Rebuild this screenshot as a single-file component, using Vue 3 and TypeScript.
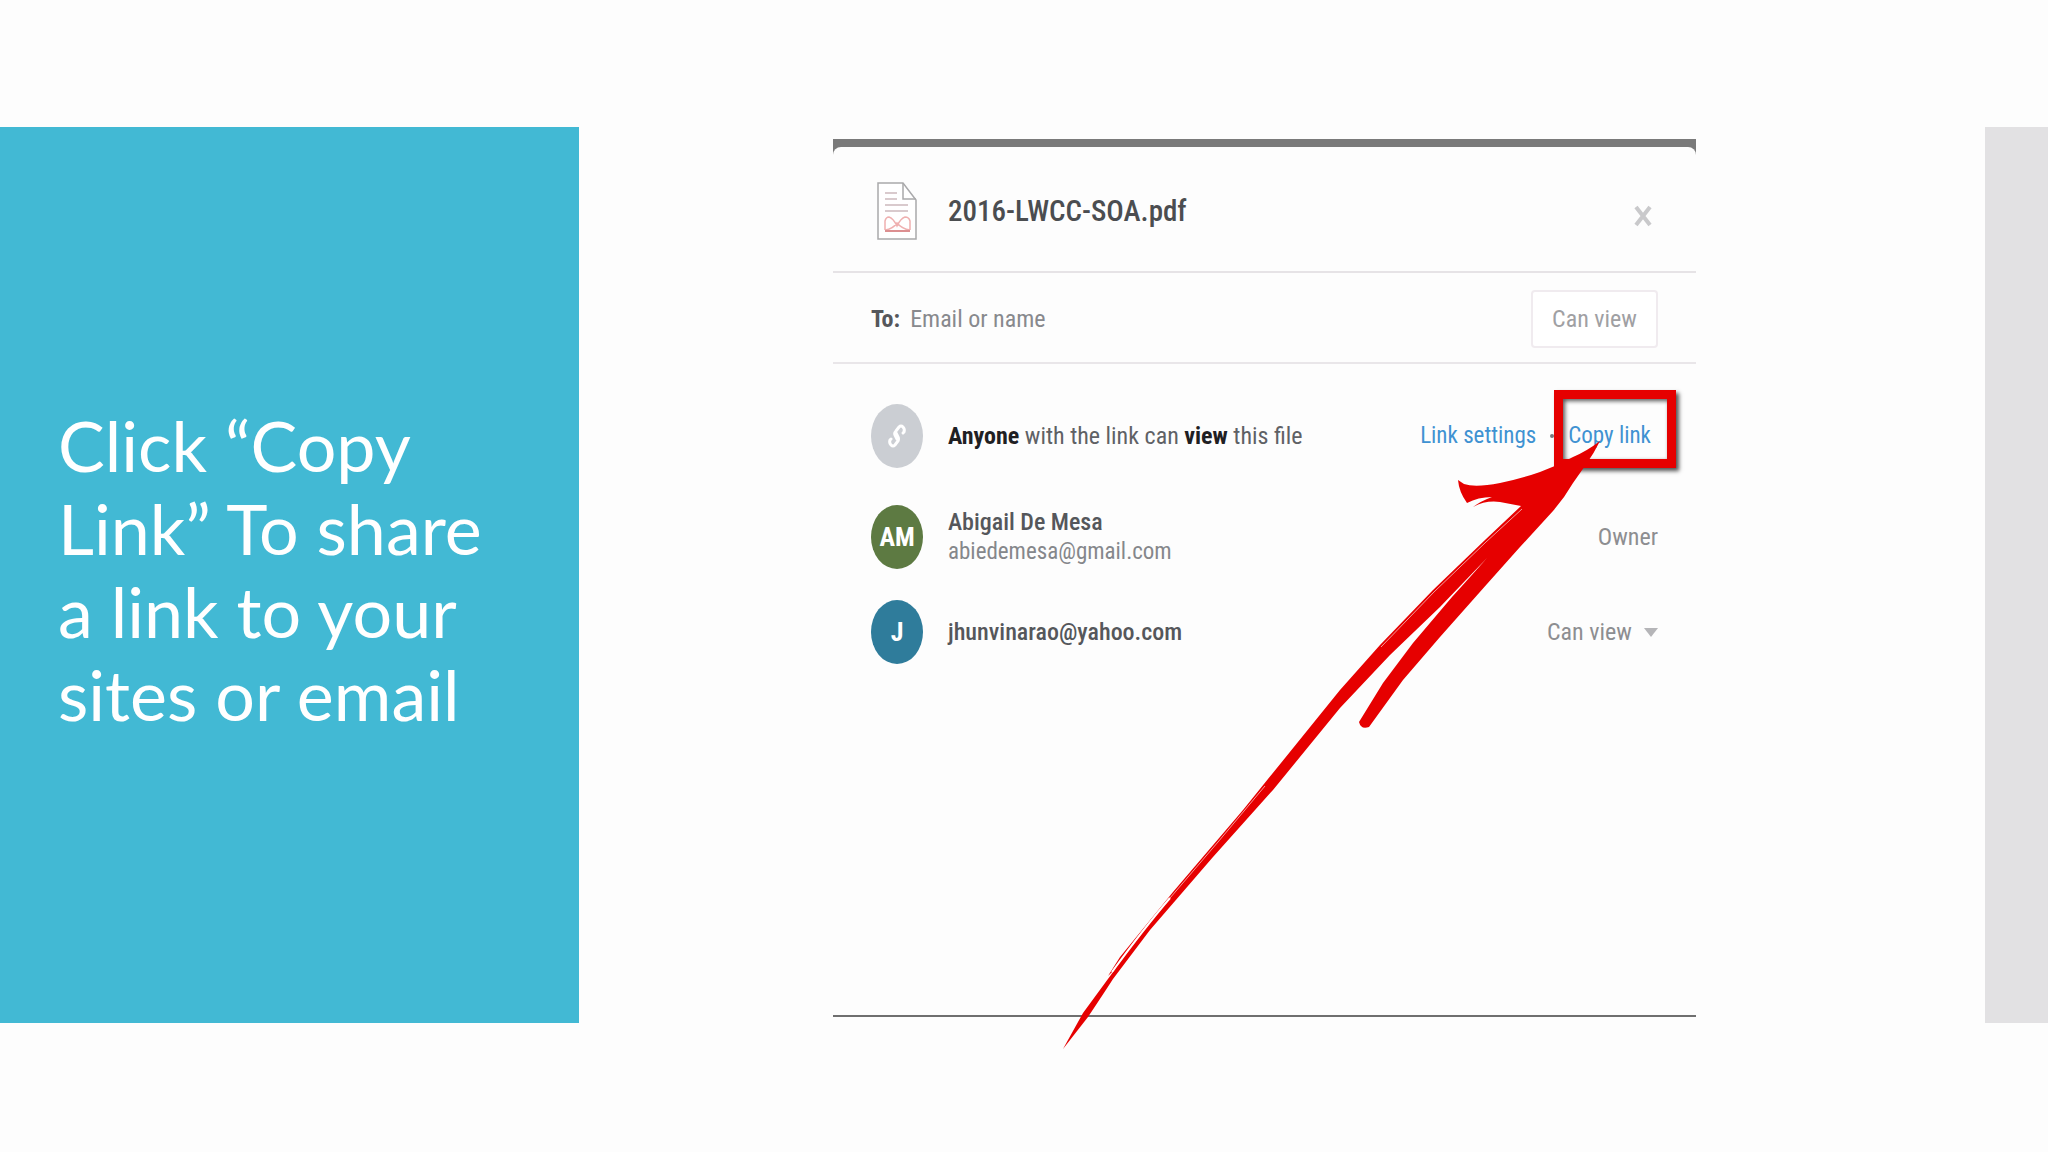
<script setup lang="ts">
import { ref } from 'vue'

interface Member {
  initials: string
  name: string
  email?: string
  color: string
  role: 'owner' | 'viewer'
}

const fileName = '2016-LWCC-SOA.pdf'
const recipient = ref('')
const access = ref('Can view')

const members: Member[] = [
  { initials: 'AM', name: 'Abigail De Mesa', email: 'abiedemesa@gmail.com', color: '#5d7a42', role: 'owner' },
  { initials: 'J', name: 'jhunvinarao@yahoo.com', color: '#2f7c9b', role: 'viewer' },
]
</script>

<template>
  <main class="slide">
    <section class="caption">
      <h1>Click “Copy Link” To share a link to your sites or email</h1>
    </section>

    <section class="figure">
      <div class="dialog">
        <header class="head">
          <svg class="file-icon" viewBox="0 0 40 58" aria-hidden="true">
            <path d="M1 1H26L39 18V57H1Z" fill="#fff" stroke="#a9a9ab" stroke-width="1.5" />
            <path d="M26 1V17H39" fill="none" stroke="#a9a9ab" stroke-width="1.5" />
            <path d="M8 11H20M8 17H20M8 23H31M8 29H31" stroke="#cdb9bd" stroke-width="1.5" />
            <path d="M8 48V39Q9 35 12 35Q16 36 20 44Q24 36 28 35Q32 35 33 39V48M8 48Q16 47 20 41Q25 47 33 48" fill="none" stroke="#efb0b0" stroke-width="1.5" />
            <path d="M8 49H33" stroke="#dc8f90" stroke-width="2" />
          </svg>
          <h2>{{ fileName }}</h2>
          <button type="button" class="close" aria-label="Close">
            <svg viewBox="0 0 18 22" aria-hidden="true">
              <path d="M2 2L16 20M16 2L2 20" stroke="#c9c9cb" stroke-width="4" />
            </svg>
          </button>
        </header>

        <form class="invite" @submit.prevent>
          <label for="recipient">To:</label>
          <input id="recipient" v-model="recipient" type="text" placeholder="Email or name" />
          <button type="button" class="permission">Can view</button>
        </form>

        <div class="access">
          <div class="row link-row">
            <span class="avatar link-avatar">
              <svg viewBox="0 0 20 24" aria-hidden="true">
                <path d="M10 15L8 11Q7 9 9 7L12 3Q14 1 16 3Q18 5 17 8L16 9" fill="none" stroke="#fff" stroke-width="3" stroke-linecap="round" />
                <path d="M9 9L11 13Q12 15 11 17L8 21Q6 23 4 21Q2 19 3 16L4 15" fill="none" stroke="#fff" stroke-width="3" stroke-linecap="round" />
              </svg>
            </span>
            <p class="who link-text"><b>Anyone</b> with the link can <b>view</b> this file</p>
            <nav class="actions">
              <a href="#settings">Link settings</a>
              <i class="dot"></i>
              <a href="#copy" class="copy">Copy link</a>
            </nav>
          </div>

          <div class="members">
            <div v-for="m in members" :key="m.name" class="row">
              <span class="avatar" :style="{ background: m.color }">{{ m.initials }}</span>
              <div class="who">
                <strong>{{ m.name }}</strong>
                <span v-if="m.email" class="email">{{ m.email }}</span>
              </div>
              <span v-if="m.role === 'owner'" class="role">Owner</span>
              <label v-else class="picker">
                <select v-model="access" :aria-label="`Access for ${m.name}`">
                  <option>Can view</option>
                </select>
                <i class="caret"></i>
              </label>
            </div>
          </div>
        </div>

        <svg class="arrow" viewBox="1040 430 660 630" aria-hidden="true">
          <path
            fill="#e60000"
            d="M1600 441Q1587 451 1573 457Q1557 466 1540 472Q1520 479 1500 483Q1475 488 1464 484L1458 480Q1459 492 1467 503Q1478 497 1492 497Q1481 501 1473 507Q1486 500 1500 502L1521 506L1485 540L1433 590L1380 645L1340 690L1243 810L1173 892L1120 957L1108 976L1116 968L1083 1013L1063 1049L1088 1017Q1104 993 1113 979L1150 930L1213 857L1273 790L1340 708L1390 655L1440 607L1487 558Q1472 575 1452 597L1413 643L1383 683L1359 722Q1361 730 1369 727L1403 680L1440 637L1487 584L1520 547L1553 511Q1565 497 1573 483L1587 463Q1594 453 1600 441Z"
          />
          <g fill="none" stroke="#fff">
            <path d="M1522 509L1486 542L1434 592L1381 647" opacity="0.6" />
            <path d="M1112 972Q1145 927 1170 898" stroke-width="2" />
            <path d="M1170 898L1218 842L1265 786" opacity="0.6" />
          </g>
        </svg>
      </div>
    </section>

    <aside class="edge"></aside>
  </main>
</template>

<style>
body {
  margin: 0;
  background: #fdfdfd;
}
</style>

<style scoped>
.slide {
  display: grid;
  grid-template-columns: 579fr 254fr 863fr 289fr 63fr;
  min-height: 100vh;
  box-sizing: border-box;
  padding: 127px 0 129px;
  overflow: hidden;
}

.caption {
  grid-column: 1;
  display: flex;
  align-items: center;
  padding: 0 80px 10px 58px;
  background: #42b9d4;
}

h1 {
  margin: 0;
  color: #fff;
  font: 400 70px/83px Lato, "Open Sans", sans-serif;
}

.figure {
  grid-column: 3;
  padding: 12px 0 6px;
  display: flex;
  font-family: "Roboto Condensed", "Liberation Sans Narrow", Roboto, sans-serif;
}

.dialog {
  position: relative;
  flex: 1;
  display: flex;
  flex-direction: column;
  border-top: 8px solid #7a7a7a;
  border-bottom: 2px solid #6f6f6f;
  background: linear-gradient(#7a7a7a, #7a7a7a) top / 100% 8px no-repeat;
}

.head {
  box-sizing: border-box;
  display: flex;
  align-items: center;
  height: 126px;
  padding: 4px 44px 0;
  border-bottom: 2px solid #e6e3e6;
  border-radius: 8px 8px 0 0;
  background: #fdfdfd;
}

.file-icon {
  width: 40px;
  height: 58px;
}

h2 {
  flex: 1;
  margin: 0 0 0 31px;
  color: #4b4d50;
  font-size: 29px;
  font-weight: 500;
}

button {
  font: inherit;
}

.close {
  padding: 10px 0 0;
  border: 0;
  background: none;
}

.close svg {
  display: block;
  width: 18px;
  height: 22px;
}

.invite {
  box-sizing: border-box;
  display: flex;
  align-items: center;
  height: 91px;
  padding: 2px 38px 0;
  border-bottom: 2px solid #e9e6e9;
  font-size: 24px;
}

.invite label {
  color: #55575b;
  font-weight: 700;
}

.invite input {
  flex: 1;
  min-width: 0;
  padding: 0 10px;
  border: 0;
  outline: 0;
  background: none;
  font: inherit;
}

.invite input::placeholder {
  color: #88898d;
  opacity: 1;
}

.permission {
  width: 127px;
  height: 58px;
  padding: 0;
  border: 2px solid #f0ebef;
  border-radius: 4px;
  background: #fff;
  color: #a0a0a3;
}

.access {
  padding: 40px 38px 0;
  font-size: 24px;
  line-height: 30px;
}

.row {
  display: flex;
  align-items: center;
}

.avatar {
  display: flex;
  align-items: center;
  justify-content: center;
  width: 52px;
  height: 64px;
  border-radius: 50%;
  color: #fff;
  font-size: 26px;
  font-weight: 700;
}

.link-avatar {
  background: #cbced3;
}

.link-avatar svg {
  width: 20px;
  height: 24px;
}

.who {
  flex: 1;
  display: flex;
  flex-direction: column;
  margin: 0 0 0 25px;
}

.who strong {
  color: #55575b;
  font-weight: 500;
}

.email {
  color: #85878b;
  font-size: 23px;
}

.link-text {
  display: block;
  color: #5f6165;
}

.link-text b {
  color: #1f2023;
}

.link-row {
  margin-bottom: 37px;
}

.members {
  display: flex;
  flex-direction: column;
  gap: 31px;
}

.actions {
  display: flex;
  align-items: center;
  gap: 14px;
  margin-right: 7px;
}

.actions a {
  color: #3f92d2;
  font-size: 23px;
  text-decoration: none;
}

.dot {
  width: 4px;
  height: 4px;
  border-radius: 50%;
  background: #77797d;
}

.copy {
  position: relative;
}

.copy::after {
  content: "";
  position: absolute;
  inset: -31px -25px -17px -14px;
  border: 9px solid #e60000;
  box-shadow: 3px 3px 4px #555, inset 2px 2px 4px #555;
}

.role {
  color: #8d8e91;
}

.picker {
  display: flex;
  align-items: center;
  gap: 12px;
}

.picker select {
  padding: 0;
  border: 0;
  appearance: none;
  background: none;
  color: #8d8e91;
  font: inherit;
}

.caret {
  border: 7px solid transparent;
  border-top: 9px solid #b5b5b8;
  border-bottom: 0;
}

.arrow {
  position: absolute;
  top: 283px;
  right: -4px;
  width: 660px;
  height: 630px;
  pointer-events: none;
}

.edge {
  grid-column: 5;
  background: #e2e1e3;
}
</style>
